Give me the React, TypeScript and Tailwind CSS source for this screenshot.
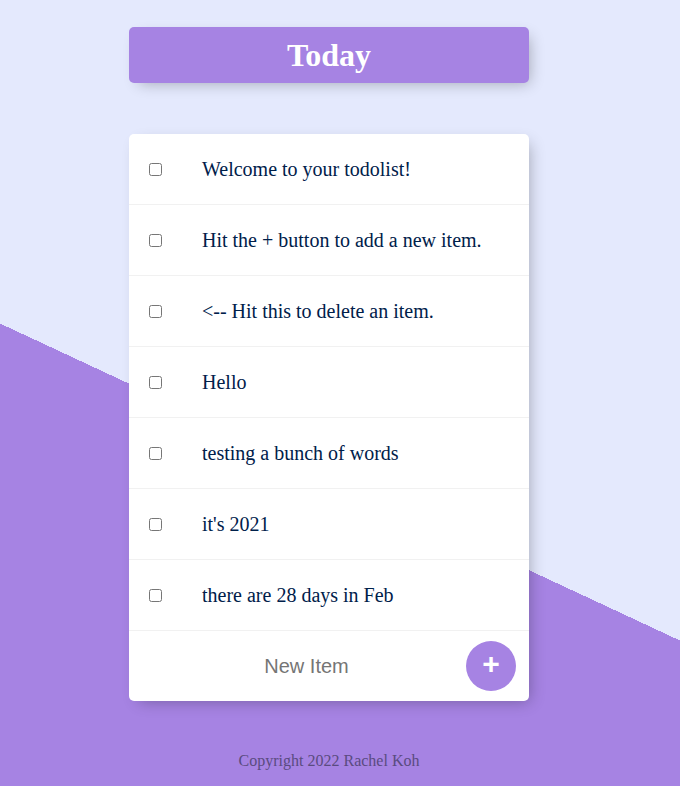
import React from "react";

const items = [
  "Welcome to your todolist!",
  "Hit the + button to add a new item.",
  "<-- Hit this to delete an item.",
  "Hello",
  "testing a bunch of words",
  "it's 2021",
  "there are 28 days in Feb",
];

export default function App() {
  return (
    <div className="min-h-[786px] w-full bg-[#E4E9FD] bg-[linear-gradient(25deg,#A683E3_41.93%,#E4E9FD_41.93%)] pt-[27px] font-['Liberation_Serif',serif]">
      <div className="w-[658px]">
        <div className="mx-auto w-[400px] h-[56px] rounded-[5px] bg-[#A683E3] shadow-[5px_5px_15px_-5px_rgba(0,0,0,0.3)] flex items-center justify-center">
          <h1 className="text-white text-[32px] font-bold leading-none">Today</h1>
        </div>

        <div className="mx-auto mt-[51px] w-[400px] rounded-[5px] bg-white shadow-[5px_5px_15px_-5px_rgba(0,0,0,0.3)]">
          {items.map((t) => (
            <div key={t} className="flex items-center min-h-[71px] border-b border-[#F1F1F1]">
              <input type="checkbox" className="m-[20px] w-[13px] h-[13px]" />
              <p className="m-0 p-[20px] text-[20px] text-[#00204A] leading-[23px]">{t}</p>
            </div>
          ))}
          <div className="flex items-center h-[70px]">
            <input
              type="text"
              placeholder="New Item"
              className="ml-[21px] w-[313px] h-[60px] text-center text-[20px] bg-transparent outline-none font-['Liberation_Sans',sans-serif] placeholder:text-[#757575]"
            />
            <button className="ml-[3px] w-[50px] h-[50px] rounded-full bg-[#A683E3] text-white text-[30px] font-bold leading-none pb-[4px] flex items-center justify-center font-['Liberation_Sans',sans-serif]">
              +
            </button>
          </div>
        </div>

        <footer className="mt-[48px] text-center text-[16px] text-[#5a4b80]">
          Copyright 2022 Rachel Koh
        </footer>
      </div>
    </div>
  );
}
